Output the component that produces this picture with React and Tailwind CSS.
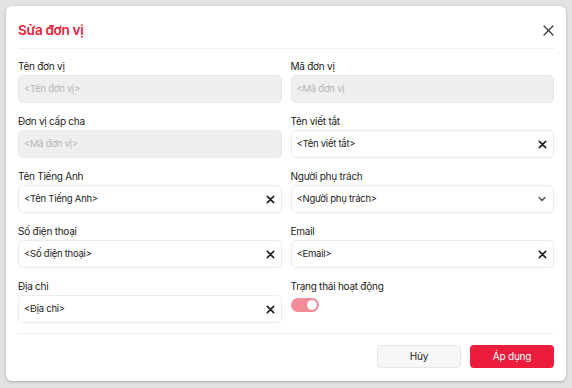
import React from "react";

const XBold = () => (
  <svg width="9" height="9" viewBox="0 0 10 10" fill="none" stroke="#1f1f1f" strokeWidth="1.8" strokeLinecap="round">
    <path d="M1.5 1.5 L8.5 8.5 M8.5 1.5 L1.5 8.5" />
  </svg>
);

const Chevron = () => (
  <svg width="10" height="10" viewBox="0 0 10 10" fill="none" stroke="#444" strokeWidth="1.2" strokeLinecap="round" strokeLinejoin="round">
    <path d="M2 3.5 L5 6.5 L8 3.5" />
  </svg>
);

function Field({ label, placeholder, disabled, icon }) {
  return (
    <div className="flex flex-col">
      <div className="h-[14px] leading-[14px] text-[10px] tracking-[-0.25px] text-[#222] mb-[2px]">{label}</div>
      <div
        className={
          disabled
            ? "h-[28px] rounded-[5px] bg-[#efefef] border border-[#e6e6e6] flex items-center px-[5px] text-[9.5px] tracking-[-0.25px] text-[#b5b5b5]"
            : "h-[28px] rounded-[5px] bg-white border border-[#ebebeb] flex items-center justify-between pl-[5px] pr-[6px] text-[9.5px] tracking-[-0.25px] text-[#222]"
        }
      >
        <span>{placeholder}</span>
        {icon === "x" && <XBold />}
        {icon === "chev" && <Chevron />}
      </div>
    </div>
  );
}

export default function App() {
  return (
    <div className="w-[572px] h-[388px] bg-[#e2e2e2] pt-[6px] pl-[6px]" style={{ fontFamily: "Inter, 'Noto Sans', sans-serif" }}>
      <div className="w-[560px] h-[375px] bg-white rounded-[6px] shadow-[0_1px_3px_rgba(0,0,0,0.25)] px-3 flex flex-col">
        <div className="pt-[14px] pb-[8px] flex items-center justify-between">
          <div className="text-[13.5px] leading-[20px] font-semibold tracking-[-0.3px] text-[#ec1c3d]">Sửa đơn vị</div>
          <svg width="11" height="11" viewBox="0 0 11 11" fill="none" stroke="#333" strokeWidth="1.2" strokeLinecap="round">
            <path d="M1 1 L10 10 M10 1 L1 10" />
          </svg>
        </div>
        <div className="h-px bg-[#eeeeee]" />
        <div className="pt-[10px] grid grid-cols-2 gap-x-[9px] gap-y-[11px]">
          <Field label="Tên đơn vị" placeholder="<Tên đơn vị>" disabled />
          <Field label="Mã đơn vị" placeholder="<Mã đơn vị" disabled />
          <Field label="Đơn vị cấp cha" placeholder="<Mã đơn vị>" disabled />
          <Field label="Tên viết tắt" placeholder="<Tên viết tắt>" icon="x" />
          <Field label="Tên Tiếng Anh" placeholder="<Tên Tiếng Anh>" icon="x" />
          <Field label="Người phụ trách" placeholder="<Người phụ trách>" icon="chev" />
          <Field label="Số điện thoại" placeholder="<Số điện thoại>" icon="x" />
          <Field label="Email" placeholder="<Email>" icon="x" />
          <Field label="Địa chỉ" placeholder="<Địa chỉ>" icon="x" />
          <div className="flex flex-col">
            <div className="h-[14px] leading-[14px] text-[10px] tracking-[-0.25px] text-[#222] mb-[2px]">Trạng thái hoạt động</div>
            <div className="pt-[3px]">
              <div className="w-[28px] h-[14px] rounded-full bg-[#f48b99] flex items-center justify-end pr-[2px]">
                <div className="w-[10px] h-[10px] rounded-full bg-white" />
              </div>
            </div>
          </div>
        </div>
        <div className="mt-[10px] h-px bg-[#eeeeee]" />
        <div className="pt-[11px] flex justify-end gap-[9px]">
          <button className="w-[84px] h-[23px] rounded-[4px] bg-[#f7f7f7] border border-[#e6e6e6] text-[10px] tracking-[-0.2px] text-[#222]">Hủy</button>
          <button className="w-[84px] h-[23px] rounded-[4px] bg-[#ec1c3d] text-[10px] tracking-[-0.2px] text-white">Áp dụng</button>
        </div>
      </div>
    </div>
  );
}
